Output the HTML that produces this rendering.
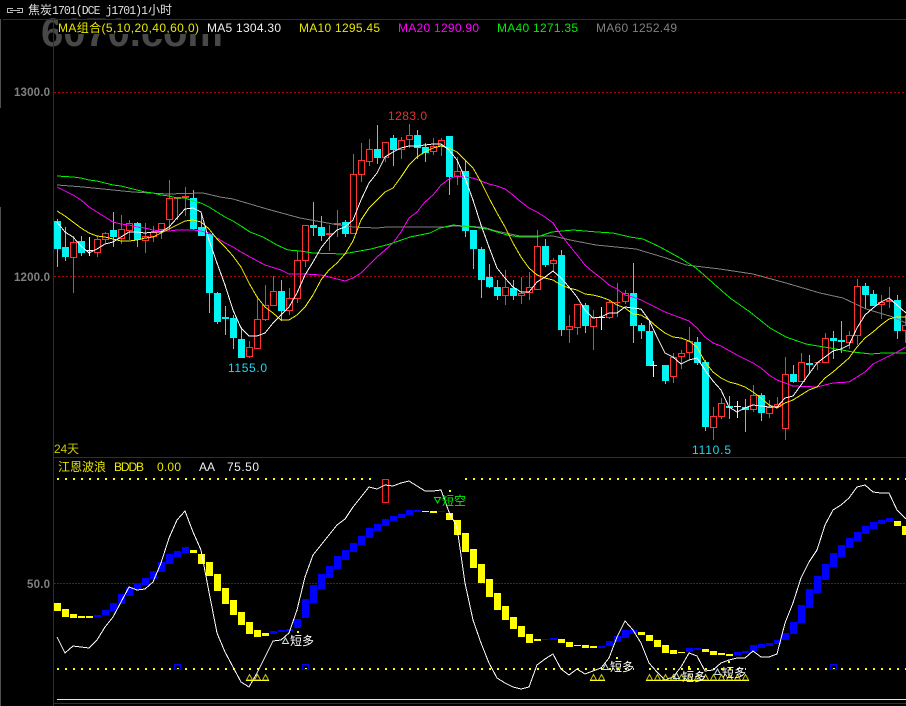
<!DOCTYPE html>
<html>
<head>
<meta charset="utf-8">
<style>
html,body{margin:0;padding:0;background:#000;width:906px;height:706px;overflow:hidden}
svg{display:block}
text{font-family:"Liberation Sans","WenQuanYi Zen Hei","Noto Sans CJK SC",sans-serif;font-size:12px}
.z{font-family:"WenQuanYi Zen Hei","Noto Sans CJK SC",sans-serif}
.m{font-family:"Liberation Mono","WenQuanYi Zen Hei","Noto Sans CJK SC",monospace}
.l{fill:none;stroke-width:1;shape-rendering:crispEdges}
</style>
</head>
<body>
<svg width="906" height="706" viewBox="0 0 906 706" xmlns="http://www.w3.org/2000/svg">
<rect width="906" height="706" fill="#000"/>

<!-- watermark -->
<text x="41" y="46" style="font-size:40px;font-weight:bold;font-family:'Liberation Sans',sans-serif" fill="#484848" textLength="182">6070.com</text>
<rect x="58" y="20" width="172" height="14" fill="#000"/>

<!-- frame -->
<g shape-rendering="crispEdges">
<path d="M0.5 19V108M0.5 207V706" stroke="#505050" fill="none"/>
<path d="M3 19.5H906M53.5 20V706M53 457.5H906M53 703.5H906" stroke="#8c0808" fill="none"/>
<path d="M54 92.5H906M54 276.5H906" stroke="#b00000" stroke-dasharray="2 2" fill="none"/>
<path d="M54 583.5H906" stroke="#900018" stroke-dasharray="2 1" fill="none"/>
</g>

<!-- header -->
<g fill="none" stroke="#b8b8b8" shape-rendering="crispEdges">
<path d="M13 8.5H7.5V12.5H13M17 8.5H22.5V12.5H17M10 10.5H20"/>
</g>
<text x="28" y="14" fill="#e0e0e0" class="z">焦炭</text>
<text x="52" y="14" fill="#e0e0e0" class="m" style="font-size:11.5px" textLength="96">1701(DCE j1701)1</text>
<text x="148" y="14" fill="#e0e0e0" class="z">小时</text>

<!-- legend -->
<text x="58" y="32" fill="#e8e800" textLength="141">MA组合(5,10,20,40,60,0)</text>
<text x="207" y="32" fill="#f0f0f0" textLength="74">MA5 1304.30</text>
<text x="299" y="32" fill="#e8e800" textLength="81">MA10 1295.45</text>
<text x="398" y="32" fill="#ff00ff" textLength="81">MA20 1290.90</text>
<text x="497" y="32" fill="#00ee00" textLength="81">MA40 1271.35</text>
<text x="596" y="32" fill="#808080" textLength="81">MA60 1252.49</text>

<!-- axis labels -->
<text x="14" y="96" fill="#808080" textLength="36" style="font-weight:bold;font-size:11.5px">1300.0</text>
<text x="14" y="281" fill="#808080" textLength="36" style="font-weight:bold;font-size:11.5px">1200.0</text>
<text x="27" y="588" fill="#808080" textLength="23" style="font-weight:bold;font-size:11.5px">50.0</text>

<!-- candles: cyan -->
<path shape-rendering="crispEdges" fill="#00f4f4" d="M54 221h7V249h-7zM62 247h7V257h-7zM78 241h7V253h-7zM110 230h7V237h-7zM134 223h7V240h-7zM190 198h7V229h-7zM198 227h7V236h-7zM206 234h7V293h-7zM214 293h7V322h-7zM222 317h7V319h-7zM230 318h7V338h-7zM238 339h7V358h-7zM278 291h7V311h-7zM310 225h7V228h-7zM318 227h7V236h-7zM342 222h7V234h-7zM374 149h7V158h-7zM390 138h7V150h-7zM414 135h7V148h-7zM422 147h7V153h-7zM446 136h7V177h-7zM462 171h7V231h-7zM470 230h7V249h-7zM478 249h7V280h-7zM486 277h7V287h-7zM494 287h7V296h-7zM510 288h7V296h-7zM542 246h7V265h-7zM558 255h7V330h-7zM582 305h7V326h-7zM630 293h7V326h-7zM638 325h7V331h-7zM646 331h7V366h-7zM662 365h7V381h-7zM694 342h7V363h-7zM702 362h7V427h-7zM726 406h7V408h-7zM742 407h7V410h-7zM758 395h7V413h-7zM790 374h7V382h-7zM806 363h7V365h-7zM830 338h7V341h-7zM838 340h7V342h-7zM862 286h7V295h-7zM870 294h7V306h-7zM894 300h7V331h-7z"/>
<path shape-rendering="crispEdges" stroke="#00f4f4" fill="none" d="M57.5 219V267M65.5 227V261M81.5 236V256M113.5 212V247M137.5 222V247M193.5 190V230M201.5 213V236M209.5 234V313M217.5 292V324M225.5 306V335M233.5 315V349M241.5 327V358M281.5 280V321M313.5 202V236M321.5 216V241M345.5 220V237M377.5 125V164M393.5 135V166M417.5 130V159M425.5 143V162M449.5 136V195M465.5 161V237M473.5 230V269M481.5 247V298M489.5 264V288M497.5 280V300M513.5 280V300M545.5 239V267M561.5 250V336M585.5 303V333M633.5 263V343M641.5 323V339M649.5 320V366M665.5 365V384M697.5 337V365M705.5 360V431M729.5 396V419M745.5 399V432M761.5 393V421M793.5 365V383M809.5 355V374M833.5 331V359M841.5 321V353M865.5 283V309M873.5 290V306M897.5 295V339"/>

<!-- candles: red -->
<path shape-rendering="crispEdges" stroke="#ff3232" fill="none" d="M70.5 242.5h6V257.5h-6zM73.5 236V242M73.5 258V293
M94.5 239.5h6V252.5h-6zM97.5 236V239M97.5 253V257
M102.5 233.5h6V239.5h-6zM105.5 232V233M105.5 240V244
M118.5 229.5h6V238.5h-6zM121.5 215V229M121.5 239V244
M126.5 223.5h6V230.5h-6zM129.5 220V223M129.5 231V240
M142.5 236.5h6V240.5h-6zM145.5 223V236M145.5 241V253
M150.5 232.5h6V236.5h-6zM153.5 226V232M153.5 237V242
M158.5 223.5h6V229.5h-6zM161.5 230V239
M166.5 198.5h6V219.5h-6zM169.5 180V198M169.5 220V230
M174.5 197.5h6V198.5h-6zM177.5 199V220
M182.5 196.5h6V197.5h-6zM185.5 187V196M185.5 198V216
M246.5 347.5h6V356.5h-6zM249.5 341V347M249.5 357V358
M254.5 319.5h6V348.5h-6zM257.5 296V319
M262.5 305.5h6V319.5h-6zM265.5 285V305M265.5 320V321
M270.5 291.5h6V305.5h-6zM273.5 276V291
M286.5 298.5h6V310.5h-6zM289.5 288V298M289.5 311V315
M294.5 260.5h6V298.5h-6zM297.5 251V260M297.5 299V303
M302.5 225.5h6V260.5h-6zM305.5 261V267
M326.5 233.5h6V234.5h-6zM329.5 225V233M329.5 235V251
M334.5 223.5h6V224.5h-6zM337.5 210V223M337.5 225V237
M350.5 174.5h6V233.5h-6zM353.5 154V174
M358.5 160.5h6V174.5h-6zM361.5 143V160M361.5 175V182
M366.5 149.5h6V161.5h-6zM369.5 139V149M369.5 162V166
M382.5 142.5h6V157.5h-6zM385.5 158V162
M398.5 140.5h6V149.5h-6zM401.5 137V140M401.5 150V159
M406.5 135.5h6V139.5h-6zM409.5 124V135M409.5 140V148
M430.5 146.5h6V151.5h-6zM433.5 138V146M433.5 152V155
M438.5 140.5h6V145.5h-6zM441.5 138V140M441.5 146V156
M454.5 171.5h6V176.5h-6zM457.5 157V171M457.5 177V185
M502.5 287.5h6V295.5h-6zM505.5 270V287M505.5 296V305
M518.5 293.5h6V295.5h-6zM521.5 277V293M521.5 296V304
M526.5 287.5h6V292.5h-6zM529.5 272V287M529.5 293V300
M534.5 246.5h6V289.5h-6zM537.5 230V246
M550.5 260.5h6V263.5h-6zM553.5 258V260M553.5 264V272
M566.5 326.5h6V329.5h-6zM569.5 315V326M569.5 330V343
M574.5 304.5h6V327.5h-6zM577.5 328V335
M590.5 317.5h6V326.5h-6zM593.5 310V317M593.5 327V350
M606.5 302.5h6V317.5h-6zM609.5 300V302M609.5 318V319
M614.5 302.5h6V302.5h-6zM617.5 283V302M617.5 303V317
M622.5 293.5h6V301.5h-6zM625.5 290V293M625.5 302V304
M670.5 357.5h6V376.5h-6zM673.5 353V357M673.5 377V383
M678.5 353.5h6V356.5h-6zM681.5 350V353M681.5 357V369
M686.5 341.5h6V352.5h-6zM689.5 327V341M689.5 353V360
M710.5 416.5h6V427.5h-6zM713.5 407V416M713.5 428V440
M718.5 403.5h6V416.5h-6zM721.5 398V403M721.5 417V419
M750.5 395.5h6V409.5h-6zM753.5 385V395M753.5 410V412
M766.5 407.5h6V413.5h-6zM769.5 400V407M769.5 414V418
M774.5 404.5h6V406.5h-6zM777.5 397V404M777.5 407V408
M782.5 374.5h6V428.5h-6zM785.5 357V374M785.5 429V440
M798.5 362.5h6V381.5h-6zM801.5 353V362
M814.5 362.5h6V362.5h-6zM817.5 363V370
M822.5 338.5h6V362.5h-6zM825.5 333V338
M846.5 335.5h6V342.5h-6zM849.5 331V335M849.5 343V349
M854.5 286.5h6V335.5h-6zM857.5 279V286M857.5 336V345
M878.5 302.5h6V304.5h-6zM881.5 295V302M881.5 305V319
M886.5 300.5h6V301.5h-6zM889.5 287V300M889.5 302V308
M902.5 325.5h6V330.5h-6zM905.5 315V325M905.5 331V343"/>

<!-- white doji -->
<path shape-rendering="crispEdges" stroke="#f0f0f0" fill="none" d="M86 250.5h7M89.5 237V256M598 317.5h7M601.5 307V330M650 365.5h7M653.5 361V377M734 406.5h7M737.5 401V418"/>

<!-- MA60 gray -->
<polyline class="l" stroke="#808080" points="57,185 83,187 133,192 167,194 203,193 220,197 233,199 267,209 300,218 333,224 353,227 377,228 387,227 447,227 453,226 483,227 496,231 520,236 553,236 570,240 596,245 636,249 666,258 686,265 720,269 753,274 786,283 820,293 843,298 866,309 893,317 906,323"/>
<!-- MA40 green -->
<polyline class="l" stroke="#00f000" points="57,176 73,177 81,178 89,180 97,181 105,183 113,185 121,186 129,188 137,190 145,192 153,193 161,195 169,196 177,198 185,198 193,201 201,203 209,207 217,212 225,217 233,221 241,226 250,232 263,237 277,245 288,250 300,251 313,253 343,254 371,249 390,244 410,237 430,233 440,228 453,225 473,227 487,229 507,235 520,237 537,237 552,232 573,230 597,232 613,233 630,237 643,239 660,247 680,258 696,268 713,283 730,298 750,312 770,328 786,337 806,344 830,348 853,352 871,354 883,353 906,353"/>
<!-- MA20 magenta -->
<polyline class="l" stroke="#ff00ff" points="57,187 73,195 81,200 89,207 97,212 105,217 113,222 121,224 129,225 137,227 145,228 153,230 161,231 169,231 177,230 185,230 193,230 201,231 209,233 217,238 225,243 233,247 241,252 250,257 265,265 281,270 289,274 305,274 321,275 329,277 345,281 353,278 361,273 369,265 377,257 385,250 393,243 401,232 409,218 417,212 425,202 433,195 441,185 449,179 457,176 465,177 473,178 481,181 489,184 497,186 505,189 513,195 521,202 529,208 537,212 545,217 553,223 561,235 569,245 577,255 585,265 593,272 601,278 609,285 617,289 625,295 633,297 641,300 649,304 665,312 681,318 689,321 697,328 705,337 713,343 721,346 737,355 753,363 761,368 769,375 777,380 785,383 793,386 817,387 825,385 833,383 849,382 857,377 865,372 873,364 881,360 889,356 897,352 906,347"/>
<!-- MA10 yellow -->
<polyline class="l" stroke="#f0f000" points="57,211 65,216 73,222 81,228 89,233 97,236 105,237 113,239 121,241 129,241 137,240 145,238 153,237 161,233 169,229 177,225 185,221 193,220 201,222 209,229 217,239 225,247 233,256 241,267 249,283 257,297 265,307 273,313 281,320 289,320 297,315 305,307 313,295 321,280 329,270 337,263 345,254 353,241 361,220 369,208 377,200 385,192 393,188 401,177 409,165 417,157 425,152 433,148 441,146 449,148 457,152 465,160 473,168 481,182 489,198 497,213 505,227 513,243 521,257 529,268 537,275 545,278 553,280 561,285 569,288 577,290 585,294 593,295 601,297 609,300 617,305 625,308 633,314 641,315 649,320 657,327 665,333 673,337 681,338 689,341 697,347 705,362 713,372 721,378 729,382 737,384 745,387 753,392 761,398 769,405 777,408 785,403 793,400 801,395 809,390 817,387 825,378 833,372 841,365 849,358 857,347 865,338 873,332 881,325 889,319 897,317 906,317"/>
<!-- MA5 white -->
<polyline class="l" stroke="#ffffff" points="57,222 65,232 73,237 81,246 89,253 97,249 105,244 113,242 121,237 129,232 137,232 145,233 153,232 161,232 169,227 177,218 185,209 193,208 201,212 209,240 217,263 225,285 233,310 241,328 249,336 257,336 265,333 273,323 281,315 289,307 297,293 305,275 313,262 321,248 329,238 337,230 345,227 353,220 361,200 369,183 377,173 385,157 393,152 401,148 409,146 417,146 425,145 433,144 441,144 449,150 457,160 465,178 473,200 481,225 489,247 497,268 505,278 513,287 521,292 529,292 537,282 545,277 553,271 561,278 569,287 577,297 585,310 593,318 601,317 609,313 617,313 625,307 633,308 641,309 649,320 657,337 665,353 673,357 681,364 689,360 697,358 705,370 713,381 721,390 729,407 737,412 745,408 753,405 761,406 769,407 777,407 785,398 793,396 801,385 809,374 817,363 825,357 833,351 841,349 849,345 857,328 865,315 873,308 881,302 889,298 897,305 906,313"/>

<!-- price labels -->
<text x="388" y="120" fill="#e83030" textLength="39">1283.0</text>
<text x="228" y="372" fill="#20d8f0" textLength="39">1155.0</text>
<text x="692" y="454" fill="#20d8f0" textLength="39">1110.5</text>
<text x="54" y="453" fill="#c8c800" textLength="25">24天</text>

<!-- lower panel title -->
<text x="58" y="471" fill="#e8e800" class="z">江恩波浪</text>
<text x="114" y="471" fill="#f0f000" textLength="30">BDDB</text>
<text x="157" y="471" fill="#e8e800" textLength="24">0.00</text>
<text x="199" y="471" fill="#f0f0f0" textLength="16">AA</text>
<text x="227" y="471" fill="#f0f0f0" textLength="32">75.50</text>

<!-- dotted lines -->
<g shape-rendering="crispEdges" fill="none" stroke="#ffff00" stroke-width="2" stroke-dasharray="2 6">
<path d="M57 479H371"/>
<path d="M465 479H906"/>
<path d="M57 669H634"/>
<path d="M649 669H746"/>
<path d="M777 669H906"/>
</g>
<path shape-rendering="crispEdges" fill="#ffff00" d="M297 631h2v2h-2zM449 490h2v2h-2zM616 657h2v2h-2zM688 666h2v4h-2zM728 661h2v2h-2z"/>

<!-- oscillator bars -->
<path shape-rendering="crispEdges" fill="#ffff00" d="M54 603h7V611h-7zM62 609h7V617h-7zM70 614h7V618h-7zM78 616h7V618h-7zM86 616h7V618h-7zM190 550h7V553h-7zM198 554h7V564h-7zM206 562h7V576h-7zM214 574h7V591h-7zM222 588h7V604h-7zM230 600h7V615h-7zM238 612h7V625h-7zM246 622h7V634h-7zM254 630h7V637h-7zM262 633h7V636h-7zM422 511h7V512h-7zM430 511h7V513h-7zM446 513h7V520h-7zM454 520h7V535h-7zM462 533h7V552h-7zM470 549h7V568h-7zM478 564h7V583h-7zM486 579h7V597h-7zM494 593h7V610h-7zM502 606h7V620h-7zM510 617h7V629h-7zM518 626h7V637h-7zM526 634h7V643h-7zM534 639h7V641h-7zM558 639h7V643h-7zM566 642h7V647h-7zM574 645h7V646h-7zM582 645h7V648h-7zM590 646h7V648h-7zM638 632h7V635h-7zM646 635h7V641h-7zM654 640h7V647h-7zM662 645h7V653h-7zM670 650h7V654h-7zM678 652h7V653h-7zM702 649h7V652h-7zM710 651h7V655h-7zM718 653h7V655h-7zM726 654h7V656h-7zM894 521h7V526h-7zM902 526h4V535h-4z"/>
<path shape-rendering="crispEdges" fill="#0000ff" d="M94 615h7V617h-7zM102 610h7V615h-7zM110 603h7V611h-7zM118 594h7V604h-7zM126 587h7V596h-7zM134 583h7V589h-7zM142 578h7V585h-7zM150 571h7V579h-7zM158 562h7V572h-7zM166 554h7V564h-7zM174 551h7V557h-7zM182 547h7V553h-7zM270 631h7V634h-7zM278 630h7V632h-7zM286 629h7V631h-7zM294 619h7V628h-7zM302 599h7V618h-7zM310 585h7V603h-7zM318 574h7V589h-7zM326 566h7V578h-7zM334 556h7V569h-7zM342 550h7V560h-7zM350 543h7V552h-7zM358 536h7V545h-7zM366 528h7V538h-7zM374 524h7V531h-7zM382 519h7V526h-7zM390 516h7V521h-7zM398 514h7V518h-7zM406 510h7V515h-7zM414 510h7V512h-7zM438 511h7V512h-7zM542 639h7V640h-7zM550 638h7V640h-7zM598 646h7V648h-7zM606 641h7V646h-7zM614 636h7V642h-7zM622 630h7V638h-7zM630 630h7V634h-7zM686 648h7V652h-7zM694 648h7V650h-7zM734 652h7V655h-7zM742 651h7V653h-7zM750 645h7V651h-7zM758 644h7V648h-7zM766 643h7V646h-7zM774 640h7V644h-7zM782 633h7V640h-7zM790 622h7V634h-7zM798 605h7V623h-7zM806 589h7V608h-7zM814 576h7V593h-7zM822 564h7V580h-7zM830 553h7V567h-7zM838 545h7V557h-7zM846 538h7V548h-7zM854 532h7V541h-7zM862 526h7V534h-7zM870 522h7V529h-7zM878 520h7V524h-7zM886 518h7V522h-7z"/>

<!-- small blue squares / red box -->
<path shape-rendering="crispEdges" fill="none" stroke="#0000ff" d="M174.5 664.5h6v5h-6zM302.5 664.5h6v5h-6zM830.5 664.5h6v5h-6z"/>
<path shape-rendering="crispEdges" fill="none" stroke="#ff2020" d="M382.5 479.5h6V502.5h-6z"/>

<!-- AA white line -->
<polyline class="l" stroke="#ffffff" points="57,637 65,653 73,646 81,647 89,648 97,640 105,627 113,617 121,602 129,587 137,590 145,589 153,582 161,563 169,538 177,520 185,511 193,532 201,550 209,592 217,633 225,652 233,667 241,682 249,687 257,673 265,657 273,641 281,640 289,633 297,610 305,577 313,555 321,545 329,535 337,525 345,519 353,507 361,497 369,487 377,489 385,485 393,486 401,483 409,481 417,486 425,491 433,491 441,490 449,512 457,527 465,583 473,620 481,643 489,663 497,678 505,683 513,687 521,689 529,687 537,665 545,659 553,654 561,669 569,675 577,669 585,674 593,671 601,668 609,658 617,637 625,621 633,630 641,643 649,663 657,672 665,680 673,677 681,667 689,653 697,656 705,671 713,670 721,663 729,660 737,658 745,658 753,651 761,657 769,657 777,654 785,623 793,603 801,578 809,562 817,550 825,525 833,510 841,505 849,498 857,487 865,485 873,492 881,493 889,493 897,510 906,519"/>

<!-- yellow triangles -->
<path fill="none" stroke="#c8c800" stroke-width="1" d="M249.5 674.5l3 5.5h-6zM257.5 674.5l3 5.5h-6zM265.5 674.5l3 5.5h-6zM593.5 674.5l3 5.5h-6zM601.5 674.5l3 5.5h-6zM649.5 674.5l3 5.5h-6zM657.5 674.5l3 5.5h-6zM665.5 674.5l3 5.5h-6zM673.5 674.5l3 5.5h-6zM681.5 674.5l3 5.5h-6zM689.5 674.5l3 5.5h-6zM697.5 674.5l3 5.5h-6zM705.5 674.5l3 5.5h-6zM713.5 674.5l3 5.5h-6zM721.5 674.5l3 5.5h-6zM729.5 674.5l3 5.5h-6zM737.5 674.5l3 5.5h-6zM745.5 674.5l3 5.5h-6z"/>
<path shape-rendering="crispEdges" stroke="#ffff00" fill="none" d="M246 680.5h23M590 680.5h15M646 680.5h103"/>

<!-- signals -->
<path fill="none" stroke="#c8e0e0" d="M285.5 638l3 5.5h-6zM605.5 664l3 5.5h-6zM676.5 673l3 5.5h-6zM717.5 669l3 5.5h-6z"/>
<text x="290" y="645" fill="#ffffff" class="z">短多</text>
<text x="610" y="671" fill="#ffffff" class="z">短多</text>
<text x="682" y="681" fill="#ffffff" class="z">短多</text>
<text x="722" y="677" fill="#ffffff" class="z">短多</text>
<path fill="none" stroke="#00ee00" d="M437.5 503l3-5.5h-6z"/>
<text x="442" y="505" fill="#00ee00" class="z">短空</text>

<!-- bottom line -->
<path shape-rendering="crispEdges" stroke="#ffff30" fill="none" d="M57 699.5H906"/>
</svg>
</body>
</html>
